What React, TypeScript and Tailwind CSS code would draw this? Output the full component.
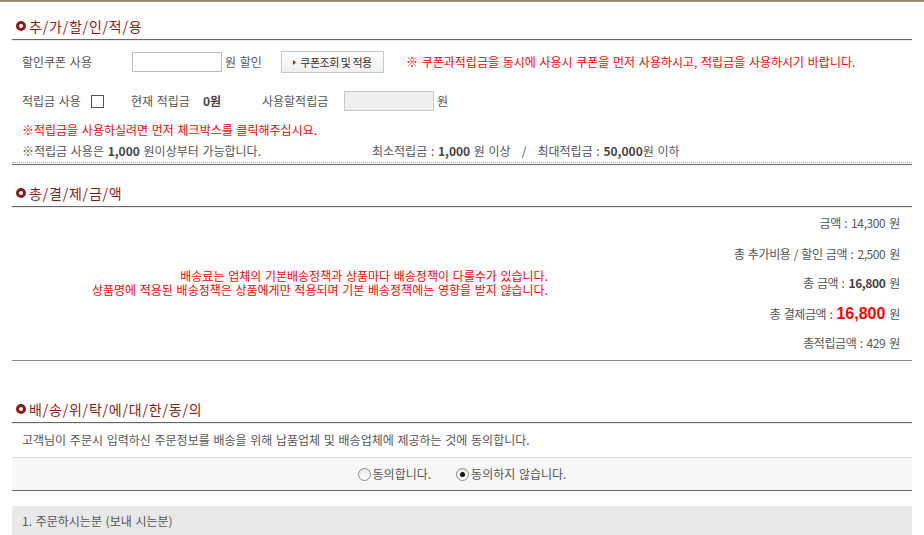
import React from "react";

const title = "text-[14px] tracking-[0.8px] [word-spacing:0px] text-[#8b1a1a]";

function SectionTitle({ text, top }: { text: string; top: string }) {
  return (
    <div className={top}>
      <div className={`flex h-[20px] items-center gap-[3px] pl-[4px] ${title}`}>
        <span className="box-border h-[10px] w-[10px] rounded-full border-[3px] border-[#8b1a1a]" />
        <span>{text}</span>
      </div>
      <div className="mt-[3px] h-px bg-[#666]" />
      <div className="h-px bg-[#ebebeb]" />
    </div>
  );
}

function Radio({ checked, label }: { checked?: boolean; label: string }) {
  return (
    <label className="flex items-center gap-[2px]">
      <span className="flex h-[13px] w-[13px] items-center justify-center rounded-full border border-[#8a8a8a] bg-gradient-to-b from-[#e9e9e9] to-white">
        {checked && <span className="h-[5px] w-[5px] rounded-full bg-[#111]" />}
      </span>
      <span>{label}</span>
    </label>
  );
}

const totals = [
  { label: "금액 :", value: "14,300", gap: "" },
  { label: "총 추가비용 / 할인 금액 :", value: "2,500", gap: "mt-[11px]" },
  { label: "총 금액 :", value: "16,800", gap: "mt-[9px]", bold: true },
  { label: "총 결제금액 :", value: "16,800", gap: "mt-[11px]", big: true },
  { label: "총적립금액 :", value: "429", gap: "mt-[9px]" },
];

export default function App() {
  return (
    <div className="min-h-[535px] bg-white font-['Noto_Sans_CJK_KR','Noto_Sans',sans-serif] text-[12px] leading-none text-[#555] [word-spacing:1px]">
      <div className="h-[2px] bg-gradient-to-b from-[#8c7a5c] to-[#b8a888]" />
      <div className="px-[12px]">
        {/* 추가할인적용 */}
        <SectionTitle text="추/가/할/인/적/용" top="mt-[14px]" />

        <div className="mt-[10px] flex h-[22px] items-center pl-[10px]">
          <span className="w-[110px]">할인쿠폰 사용</span>
          <input className="box-border h-[20px] w-[90px] border border-[#bbb] bg-white" />
          <span className="ml-[3px] w-[56px]">원 할인</span>
          <button className="box-border flex h-[22px] w-[103px] items-center justify-center gap-[4px] border border-[#c8c8c8] bg-gradient-to-b from-white to-[#f0f0f0] text-[11px] tracking-[-0.5px] text-[#333]">
            <svg width="3" height="5" viewBox="0 0 3 5">
              <path d="M0 0 L3 2.5 L0 5 Z" fill="#c00" />
            </svg>
            쿠폰조회 및 적용
          </button>
          <span className="ml-[22px] text-[#f00]">
            ※ 쿠폰과적립금을 동시에 사용시 쿠폰을 먼저 사용하시고, 적립금을 사용하시기 바랍니다.
          </span>
        </div>

        <div className="mt-[18px] flex h-[20px] items-center pl-[10px]">
          <span className="w-[69px]">적립금 사용</span>
          <span className="box-border h-[13px] w-[13px] border border-[#555] bg-white" />
          <span className="ml-[27px] w-[72px]">현재 적립금</span>
          <span className="w-[59px] font-bold text-[#444]">0원</span>
          <span className="w-[82px]">사용할적립금</span>
          <input disabled className="box-border h-[20px] w-[90px] border border-[#c8c8c8] bg-[#efefef]" />
          <span className="ml-[3px]">원</span>
        </div>

        <div className="mt-[12px] flex h-[14px] items-center pl-[10px] text-[#f00]">
          ※적립금을 사용하실려면 먼저 체크박스를 클릭해주십시요.
        </div>

        <div className="mt-[7px] flex h-[14px] items-center pl-[10px]">
          <span className="w-[350px]">
            ※적립금 사용은 <b className="text-[#444]">1,000</b> 원이상부터 가능합니다.
          </span>
          <span>
            최소적립금 : <b className="text-[#444]">1,000</b> 원 이상 &nbsp;&nbsp;/&nbsp;&nbsp; 최대적립금 :{" "}
            <b className="text-[#444]">50,000</b>원 이하
          </span>
        </div>

        <div className="mt-[4px] border-t border-dotted border-[#aaa]" />
        <div className="mt-[1px] h-px bg-[#777]" />
        <div className="h-px bg-[#eee]" />

        {/* 총결제금액 */}
        <SectionTitle text="총/결/제/금/액" top="mt-[17px]" />

        <div className="mt-[5px] flex items-center">
          <p className="w-[536px] shrink-0 text-right leading-[14px] text-[#f00]">
            배송료는 업체의 기본배송정책과 상품마다 배송정책이 다를수가 있습니다.
            <br />
            상품명에 적용된 배송정책은 상품에게만 적용되며 기본 배송정책에는 영향을 받지 않습니다.
          </p>
          <div className="flex flex-1 flex-col items-end pr-[12px] tracking-[-0.4px]">
            {totals.map((t) => (
              <div key={t.label} className={`flex h-[20px] items-center gap-[4px] ${t.gap}`}>
                <span>{t.label}</span>
                {t.big ? (
                  <span className="font-['Liberation_Sans',sans-serif] text-[16px] font-bold tracking-normal text-[#f00]">
                    {t.value}
                  </span>
                ) : (
                  <span className={t.bold ? "font-bold text-[#444]" : ""}>{t.value}</span>
                )}
                <span>원</span>
              </div>
            ))}
          </div>
        </div>

        <div className="mt-[7px] h-px bg-[#888]" />

        {/* 배송위탁에대한동의 */}
        <SectionTitle text="배/송/위/탁/에/대/한/동/의" top="mt-[38px]" />

        <div className="mt-[8px] flex h-[16px] items-center pl-[10px]">
          고객님이 주문시 입력하신 주문정보를 배송을 위해 납품업체 및 배송업체에 제공하는 것에 동의합니다.
        </div>

        <div className="mt-[9px] h-px bg-[#ddd]" />
        <div className="flex h-[32px] items-center justify-center gap-[25px] bg-[#f7f7f7]">
          <Radio label="동의합니다." />
          <Radio checked label="동의하지 않습니다." />
        </div>
        <div className="h-px bg-[#666]" />

        <div className="mt-[15px] flex h-[30px] items-center bg-[#e8e8e8] pl-[10px]">
          1. 주문하시는분 (보내 시는분)
        </div>
      </div>
    </div>
  );
}
